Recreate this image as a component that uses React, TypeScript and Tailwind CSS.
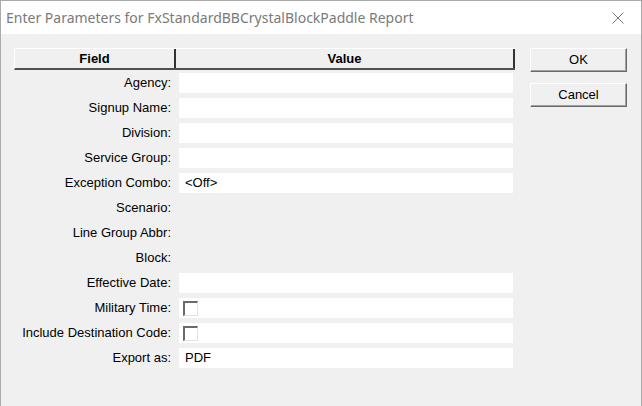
import React from "react";

type Row = { label: string; kind: "input" | "none" | "check"; value?: string };

const rows: Row[] = [
  { label: "Agency:", kind: "input" },
  { label: "Signup Name:", kind: "input" },
  { label: "Division:", kind: "input" },
  { label: "Service Group:", kind: "input" },
  { label: "Exception Combo:", kind: "input", value: "<Off>" },
  { label: "Scenario:", kind: "none" },
  { label: "Line Group Abbr:", kind: "none" },
  { label: "Block:", kind: "none" },
  { label: "Effective Date:", kind: "input" },
  { label: "Military Time:", kind: "check" },
  { label: "Include Destination Code:", kind: "check" },
  { label: "Export as:", kind: "input", value: "PDF" },
];

function Checkbox() {
  return (
    <div className="ml-[4px] h-[15px] w-[15px] border-t-2 border-l-2 border-t-[#6a6a6a] border-l-[#6a6a6a] border-r border-b border-r-[#e3e3e3] border-b-[#e3e3e3] bg-white" />
  );
}

function Button({ label }: { label: string }) {
  return (
    <div className="flex h-[24px] w-[97px] items-center justify-center border-t border-l border-t-white border-l-white border-r border-b border-r-[#696969] border-b-[#696969] bg-[#f0f0f0] shadow-[inset_-1px_-1px_0_#a0a0a0] text-[13px] text-black">
      {label}
    </div>
  );
}

export default function App() {
  return (
    <div
      className="flex h-[406px] w-[642px] flex-col overflow-hidden border-l border-r border-t border-[#aaaaaa] bg-[#f0f0f0]"
      style={{ fontFamily: '"Liberation Sans", Arial, sans-serif' }}
    >
      <div className="flex h-[33px] shrink-0 items-center justify-between bg-white pl-[5px] pr-[17px]">
        <span
          className="text-[14px] text-[#7a7a7a]"
          style={{ fontFamily: '"Noto Sans", "Open Sans", sans-serif' }}
        >
          Enter Parameters for FxStandardBBCrystalBlockPaddle Report
        </span>
        <svg width="12" height="12" viewBox="0 0 12 12" className="mt-[1px]">
          <path d="M0.5 0.5 L11.5 11.5 M11.5 0.5 L0.5 11.5" stroke="#7a7a7a" strokeWidth="1" fill="none" />
        </svg>
      </div>
      <div className="flex flex-1 pl-[13px] pt-[14px]">
        <div className="flex w-[501px] flex-col">
          <div className="flex h-[22px] border-t border-l border-t-white border-l-white border-b-2 border-b-[#505050] text-[13px] font-bold text-black">
            <div className="flex w-[161px] items-center justify-center border-r-2 border-r-[#333333]">
              Field
            </div>
            <div className="flex flex-1 items-center justify-center border-r-2 border-r-[#333333]">
              Value
            </div>
          </div>
          <div className="mt-[3px] flex flex-col gap-[5px]">
            {rows.map((r) => (
              <div key={r.label} className="flex h-[20px] items-center">
                <div className="w-[157px] text-right text-[13px] text-black">{r.label}</div>
                {r.kind !== "none" && (
                  <div className="ml-[8px] flex h-[20px] w-[334px] items-center bg-white text-[13px] text-black">
                    {r.kind === "check" ? <Checkbox /> : r.value ? <span className="pl-[6px]">{r.value}</span> : null}
                  </div>
                )}
              </div>
            ))}
          </div>
        </div>
        <div className="ml-[15px] flex flex-col gap-[11px]">
          <Button label="OK" />
          <Button label="Cancel" />
        </div>
      </div>
    </div>
  );
}
